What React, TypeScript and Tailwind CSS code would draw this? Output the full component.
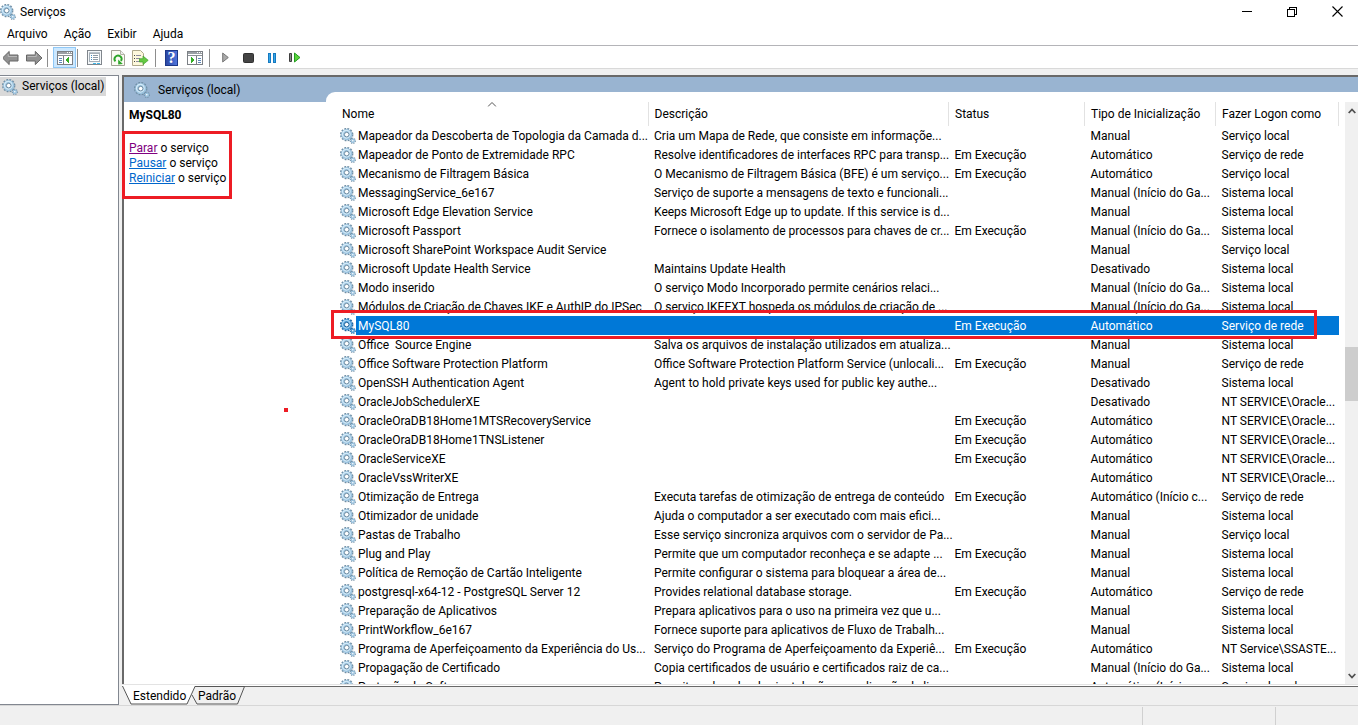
import React from "react";

type Service = [name: string, description: string, status: string, startup: string, logon: string];

const RUN = "Em Execução";
const TRIGGER = "Manual (Início do Ga...";

const services: Service[] = [
  ["Mapeador da Descoberta de Topologia da Camada d...", "Cria um Mapa de Rede, que consiste em informaçõe...", "", "Manual", "Serviço local"],
  ["Mapeador de Ponto de Extremidade RPC", "Resolve identificadores de interfaces RPC para transp...", RUN, "Automático", "Serviço de rede"],
  ["Mecanismo de Filtragem Básica", "O Mecanismo de Filtragem Básica (BFE) é um serviço...", RUN, "Automático", "Serviço local"],
  ["MessagingService_6e167", "Serviço de suporte a mensagens de texto e funcionali...", "", TRIGGER, "Sistema local"],
  ["Microsoft Edge Elevation Service", "Keeps Microsoft Edge up to update. If this service is d...", "", "Manual", "Sistema local"],
  ["Microsoft Passport", "Fornece o isolamento de processos para chaves de cr...", RUN, TRIGGER, "Sistema local"],
  ["Microsoft SharePoint Workspace Audit Service", "", "", "Manual", "Serviço local"],
  ["Microsoft Update Health Service", "Maintains Update Health", "", "Desativado", "Sistema local"],
  ["Modo inserido", "O serviço Modo Incorporado permite cenários relaci...", "", TRIGGER, "Sistema local"],
  ["Módulos de Criação de Chaves IKE e AuthIP do IPSec", "O serviço IKEEXT hospeda os módulos de criação de ...", "", TRIGGER, "Sistema local"],
  ["MySQL80", "", RUN, "Automático", "Serviço de rede"],
  ["Office  Source Engine", "Salva os arquivos de instalação utilizados em atualiza...", "", "Manual", "Sistema local"],
  ["Office Software Protection Platform", "Office Software Protection Platform Service (unlocali...", RUN, "Manual", "Serviço de rede"],
  ["OpenSSH Authentication Agent", "Agent to hold private keys used for public key authe...", "", "Desativado", "Sistema local"],
  ["OracleJobSchedulerXE", "", "", "Desativado", "NT SERVICE\\Oracle..."],
  ["OracleOraDB18Home1MTSRecoveryService", "", RUN, "Automático", "NT SERVICE\\Oracle..."],
  ["OracleOraDB18Home1TNSListener", "", RUN, "Automático", "NT SERVICE\\Oracle..."],
  ["OracleServiceXE", "", RUN, "Automático", "NT SERVICE\\Oracle..."],
  ["OracleVssWriterXE", "", "", "Automático", "NT SERVICE\\Oracle..."],
  ["Otimização de Entrega", "Executa tarefas de otimização de entrega de conteúdo", RUN, "Automático (Início c...", "Serviço de rede"],
  ["Otimizador de unidade", "Ajuda o computador a ser executado com mais efici...", "", "Manual", "Sistema local"],
  ["Pastas de Trabalho", "Esse serviço sincroniza arquivos com o servidor de Pa...", "", "Manual", "Serviço local"],
  ["Plug and Play", "Permite que um computador reconheça e se adapte ...", RUN, "Manual", "Sistema local"],
  ["Política de Remoção de Cartão Inteligente", "Permite configurar o sistema para bloquear a área de...", "", "Manual", "Sistema local"],
  ["postgresql-x64-12 - PostgreSQL Server 12", "Provides relational database storage.", RUN, "Automático", "Serviço de rede"],
  ["Preparação de Aplicativos", "Prepara aplicativos para o uso na primeira vez que u...", "", "Manual", "Sistema local"],
  ["PrintWorkflow_6e167", "Fornece suporte para aplicativos de Fluxo de Trabalh...", "", "Manual", "Sistema local"],
  ["Programa de Aperfeiçoamento da Experiência do Us...", "Serviço do Programa de Aperfeiçoamento da Experiê...", RUN, "Automático", "NT Service\\SSASTE..."],
  ["Propagação de Certificado", "Copia certificados de usuário e certificados raiz de ca...", "", TRIGGER, "Sistema local"],
  ["Proteção de Software", "Permite o download, a instalação e a aplicação de lic...", "", "Automático (Início ...", "Serviço de rede"],
];

const columns = ["Nome", "Descrição", "Status", "Tipo de Inicialização", "Fazer Logon como"];

function Gears({ selected = false }: { selected?: boolean }) {
  const dark = selected ? "#1f639b" : "#6f8da3";
  const mid = selected ? "#4a9bd6" : "#9ac2de";
  const light = selected ? "#a5d5f5" : "#d3eaf8";
  return (
    <svg width="16" height="16" viewBox="0 0 16 16" className="shrink-0" aria-hidden="true">
      <circle cx="6.7" cy="6.6" r="5.7" fill="none" stroke={dark} strokeWidth="2" strokeDasharray="1.8 1.18" />
      <circle cx="6.7" cy="6.6" r="4" fill="none" stroke={mid} strokeWidth="3.2" />
      <circle cx="6.3" cy="6.2" r="3.8" fill="none" stroke={light} strokeWidth="1.3" />
      <circle cx="6.7" cy="6.6" r="2.3" fill="#fff" stroke={dark} strokeWidth="1" />
      <circle cx="12.8" cy="12.8" r="2.4" fill="none" stroke={dark} strokeWidth="1.4" strokeDasharray="1.1 0.8" />
      <circle cx="12.8" cy="12.8" r="1.5" fill="#fff" stroke={mid} strokeWidth="1.4" />
    </svg>
  );
}

function Arrow({ forward = false }: { forward?: boolean }) {
  return (
    <svg width="18" height="16" viewBox="0 0 18 16" aria-hidden="true">
      <path
        d={forward ? "M16 8L9.3 1.4V5H.5v6h8.8v3.6z" : "M-.5 8l6.7-6.6V5H15v6H6.2v3.6z"}
        fill="#929292"
        stroke="#666"
        strokeLinejoin="round"
      />
      <path d={forward ? "M1.5 6.5h8.8V4" : "M5.2 4v2.5H14"} fill="none" stroke="#b9b9b9" />
    </svg>
  );
}

function ConsoleWindow({ tree = false }: { tree?: boolean }) {
  return (
    <svg width="16" height="14" viewBox="0 0 16 14" shapeRendering="crispEdges" aria-hidden="true">
      <rect x="0.5" y="0.5" width="15" height="13" fill="#fff" stroke="#7c8085" />
      <path d="M1 1h14v2H1z" fill="#9ba0a5" />
      <path d="M10 1.5h1M12 1.5h1M14 1.5h1" stroke="#fff" />
      <path d="M1 4.5h14" stroke="#8b9095" />
      {tree ? (
        <>
          <path d="M6.5 5v8" stroke="#7c8085" />
          <path d="M2 7.5h3M2 9.5h3M2 11.5h3" stroke="#5c86b8" />
          <path d="M12 6v6L8.5 9z" fill="#34ad25" />
        </>
      ) : (
        <>
          <path d="M9.5 5v8" stroke="#7c8085" />
          <path d="M11 7.5h3M11 9.5h3M11 11.5h3" stroke="#5c86b8" />
          <path d="M4 6v6L7.5 9z" fill="#34ad25" />
        </>
      )}
    </svg>
  );
}

function PropertiesIcon() {
  return (
    <svg width="16" height="16" viewBox="0 0 16 16" shapeRendering="crispEdges" aria-hidden="true">
      <rect x="0.5" y="0.5" width="14" height="14" fill="#f4f7f9" stroke="#80868c" />
      <rect x="2.5" y="3.5" width="10" height="8" fill="#fff" stroke="#a5afb8" />
      <path d="M2 2.5h11" stroke="#bcc4cb" />
      <path d="M4 5.5h1M4 7.5h1M4 9.5h1" stroke="#3e8ec6" />
      <path d="M6 5.5h5M6 7.5h5M6 9.5h5" stroke="#8f9aa5" />
      <path d="M6 13.5h3M10 13.5h3" stroke="#3cb5e6" />
    </svg>
  );
}

function RefreshIcon() {
  return (
    <svg width="14" height="16" viewBox="0 0 14 16" aria-hidden="true">
      <path d="M.5.5h9l4 4v11H.5z" fill="#fcfcf4" stroke="#a2a294" />
      <path d="M9.5.5v4h4" fill="#eee" stroke="#b5b5a8" />
      <path d="M4.4 11.4A3.5 3.5 0 1 1 10 11" fill="none" stroke="#2fa62b" strokeWidth="1.9" />
      <path d="M7.2 9.6v5l4.6-.6z" fill="#2fa62b" />
    </svg>
  );
}

function ExportIcon() {
  return (
    <svg width="17" height="16" viewBox="0 0 17 16" aria-hidden="true">
      <path d="M.5.5h8l3 3v12H.5z" fill="#fdf8dc" stroke="#aea88b" />
      <path d="M2 5.5h1M2 8.5h1M2 11.5h1" stroke="#444" />
      <path d="M4 5.5h5M4 8.5h4M4 11.5h5" stroke="#8b8ba0" />
      <path d="M7.5 8.7H11V6l5.2 4.3L11 14.6V12H7.5z" fill="#66c943" stroke="#3e9f2b" strokeWidth="0.7" />
    </svg>
  );
}

function HelpIcon() {
  return (
    <span className="flex h-4 w-[13px] items-center justify-center border border-[#1c3788] bg-linear-to-r from-[#2b47a4] to-[#4f75dc] font-['Liberation_Serif',serif] text-base leading-4 font-bold text-white">
      ?
    </span>
  );
}

function ToolButton({ label, active = false, children }: { label: string; active?: boolean; children: React.ReactNode }) {
  return (
    <button
      type="button"
      aria-label={label}
      className={
        active
          ? "flex h-[21px] w-[23px] items-center justify-center border border-[#90c8f6] bg-[#cce8ff]"
          : "flex h-[21px] w-[23px] items-center justify-center"
      }
    >
      {children}
    </button>
  );
}

function Divider({ wide = false }: { wide?: boolean }) {
  return (
    <span className={wide ? "mr-1 ml-[3px] h-[18px] w-px bg-[#8d8d8d]" : "mr-[5px] ml-px h-[18px] w-px bg-[#8d8d8d]"} />
  );
}

function Toolbar() {
  return (
    <div className="flex h-[23px] items-center border-b border-[#d9d9d9] bg-white pt-px">
      <ToolButton label="Voltar"><Arrow /></ToolButton>
      <ToolButton label="Avançar"><Arrow forward /></ToolButton>
      <Divider />
      <ToolButton label="Mostrar árvore de console" active><ConsoleWindow tree /></ToolButton>
      <Divider />
      <ToolButton label="Propriedades"><PropertiesIcon /></ToolButton>
      <ToolButton label="Atualizar"><RefreshIcon /></ToolButton>
      <ToolButton label="Exportar lista"><ExportIcon /></ToolButton>
      <Divider wide />
      <ToolButton label="Ajuda"><HelpIcon /></ToolButton>
      <ToolButton label="Mostrar painel de ações"><ConsoleWindow /></ToolButton>
      <Divider wide />
      <ToolButton label="Iniciar serviço">
        <svg width="7" height="11" viewBox="0 0 7 11" aria-hidden="true">
          <path d="M.7 1v9l5.6-4.5z" fill="#a9a9a9" stroke="#777" />
        </svg>
      </ToolButton>
      <ToolButton label="Parar serviço">
        <svg width="11" height="10" viewBox="0 0 11 10" aria-hidden="true">
          <rect x="0.5" y="0.5" width="10" height="9" rx="1" fill="#444" stroke="#303030" />
        </svg>
      </ToolButton>
      <ToolButton label="Pausar serviço">
        <svg width="8" height="10" viewBox="0 0 8 10" shapeRendering="crispEdges" aria-hidden="true">
          <path d="M0 0h3v10H0zM5 0h3v10H5z" fill="#1679c0" />
          <path d="M1 1h1v8H1zM6 1h1v8H6z" fill="#35a7e8" />
        </svg>
      </ToolButton>
      <ToolButton label="Reiniciar serviço">
        <svg width="12" height="11" viewBox="0 0 12 11" aria-hidden="true">
          <path d="M.5 1.5h2v8h-2z" fill="#888" stroke="#3d3d3d" />
          <path d="M5.5 1v9L11 5.5z" fill="#5bd33b" stroke="#239d20" />
        </svg>
      </ToolButton>
    </div>
  );
}

function ServiceTable() {
  return (
    <table className="w-full table-fixed border-collapse text-left whitespace-pre">
      <colgroup>
        <col className="w-[312px]" />
        <col />
        <col className="w-[136px]" />
        <col className="w-[131px]" />
        <col className="w-[123px]" />
      </colgroup>
      <thead>
        <tr className="h-6">
          {columns.map((column, i) => (
            <th key={column} className="relative border-r border-[#e2e2e2] p-0 pl-[6px] font-normal">
              {column}
              {i === 0 && (
                <svg width="9" height="5" viewBox="0 0 9 5" className="absolute top-0 left-1/2 -translate-x-1/2" aria-hidden="true">
                  <path d="M.5 4.5l4-4 4 4" fill="none" stroke="#555" />
                </svg>
              )}
            </th>
          ))}
        </tr>
      </thead>
      <tbody className="leading-[17px]">
        {services.map(([name, ...cells]) => {
          const selected = name === "MySQL80";
          return (
            <tr key={name} className="h-[19px]">
              <td className="p-0 pl-1">
                <div className="flex h-[19px] items-center">
                  <Gears selected={selected} />
                  <span className={selected ? "h-[19px] flex-1 bg-[#0078d7] pt-[2px] pl-[2px] text-white" : "h-[19px] flex-1 pt-[2px] pl-[2px]"}>
                    {name}
                  </span>
                </div>
              </td>
              {cells.map((cell, i) => (
                <td key={i} className={selected ? "bg-[#0078d7] p-0 pt-[2px] pl-[6px] text-white" : "p-0 pt-[2px] pl-[6px]"}>
                  {cell}
                </td>
              ))}
            </tr>
          );
        })}
      </tbody>
    </table>
  );
}

function ScrollBar() {
  return (
    <div className="ml-[6px] flex w-[13px] shrink-0 flex-col bg-[#f0f0f0]">
      <button type="button" aria-label="Rolar para cima" className="flex h-[17px] items-center justify-center">
        <svg width="8" height="6" viewBox="0 0 8 6" aria-hidden="true">
          <path d="M.7 5L4 1.5 7.3 5" fill="none" stroke="#505050" strokeWidth="1.8" />
        </svg>
      </button>
      <div className="grow-[228]" />
      <div className="h-[54px] bg-[#cdcdcd]" />
      <div className="grow-[266]" />
      <button type="button" aria-label="Rolar para baixo" className="flex h-[17px] items-center justify-center">
        <svg width="8" height="6" viewBox="0 0 8 6" aria-hidden="true">
          <path d="M.7 1L4 4.5 7.3 1" fill="none" stroke="#505050" strokeWidth="1.8" />
        </svg>
      </button>
    </div>
  );
}

function DetailPanel() {
  return (
    <section className="relative w-[202px] shrink-0 pt-1 pl-[5px]">
      <h2 className="leading-[19px] font-bold">MySQL80</h2>
      <ul className="mt-4 leading-[15px]">
        <li><a href="#parar" className="text-[#800080] underline">Parar</a> o serviço</li>
        <li><a href="#pausar" className="text-[#0066cc] underline">Pausar</a> o serviço</li>
        <li><a href="#reiniciar" className="text-[#0066cc] underline">Reiniciar</a> o serviço</li>
      </ul>
      <div className="pointer-events-none absolute top-[29px] -left-[2px] h-[68px] w-[110px] border-3 border-[#ed1c24]" />
      <div className="pointer-events-none absolute top-[306px] left-[160px] size-1 bg-[#ed1c24]" />
    </section>
  );
}

function ViewTabs() {
  return (
    <div className="relative h-[19px] border-t border-[#696969]">
      <svg width="124" height="19" viewBox="0 0 124 19" className="absolute -top-px left-0" aria-hidden="true">
        <path d="M70 .5h52l-7 17.5H75l-5-9z" fill="#f0f0f0" />
        <path d="M72 .5h50.5l-7 17.5H75l-5-9" fill="none" stroke="#555" />
        <path d="M0 0h73l-8 18H9z" fill="#fff" />
        <path d="M.5 0L9 18h56L73 .5" fill="none" stroke="#555" />
      </svg>
      <div className="relative flex pl-[11px] leading-[18px]" role="tablist">
        <button type="button" role="tab" aria-selected="true" className="w-[65px] text-left">Estendido</button>
        <button type="button" role="tab" aria-selected="false">Padrão</button>
      </div>
    </div>
  );
}

export default function App() {
  return (
    <div className="flex h-screen flex-col overflow-hidden bg-[#f0f0f0] font-[Roboto,'Noto_Sans',sans-serif] text-xs leading-[19px] text-black">
      <header className="flex h-[23px] shrink-0 items-center bg-white">
        <Gears />
        <h1 className="ml-1 flex-1 pt-[2px]">Serviços</h1>
        <button type="button" aria-label="Minimizar" className="flex h-[23px] w-[45px] items-center justify-center">
          <svg width="10" height="10" shapeRendering="crispEdges" aria-hidden="true"><path d="M0 4.5h10" stroke="#000" /></svg>
        </button>
        <button type="button" aria-label="Restaurar" className="flex h-[21px] w-[46px] items-center justify-center">
          <svg width="10" height="10" fill="none" stroke="#000" shapeRendering="crispEdges" aria-hidden="true">
            <path d="M.5 2.5h7v7h-7zM2.5 2.5v-2h7v7h-2" />
          </svg>
        </button>
        <button type="button" aria-label="Fechar" className="flex h-[21px] w-[43px] items-center justify-center pl-[2px]">
          <svg width="11" height="11" aria-hidden="true"><path d="M.5.5l10 10M10.5.5l-10 10" stroke="#000" strokeWidth="1.1" /></svg>
        </button>
      </header>
      <nav className="flex h-[23px] shrink-0 items-center gap-4 border-b border-[#b4b4b8] bg-white pl-[7px]">
        <button type="button">Arquivo</button>
        <button type="button">Ação</button>
        <button type="button">Exibir</button>
        <button type="button">Ajuda</button>
      </nav>
      <Toolbar />

      <main className="flex min-h-0 flex-1 gap-[3px] pt-[6px]">
        <aside className="w-[119px] shrink-0 border-t border-r border-b border-[#828790] bg-white">
          <a href="#servicos" className="mt-px flex h-[19px] w-[106px] items-center gap-1 bg-[#d9d9d9] pl-[2px]">
            <Gears />
            <span>Serviços (local)</span>
          </a>
        </aside>
        <div className="flex min-w-0 flex-1 flex-col">
          <div className="flex min-h-0 flex-1 flex-col border-t-2 border-l-2 border-[#696969] bg-white">
            <div className="flex h-[25px] shrink-0 bg-[#99b4d1]">
              <div className="flex w-[202px] shrink-0 items-center gap-2 pt-px pl-[10px]">
                <Gears />
                <span>Serviços (local)</span>
              </div>
              <div className="mt-[15px] flex-1 rounded-tl-[9px] bg-white" />
            </div>
            <div className="flex min-h-0 flex-1">
              <DetailPanel />
              <div className="relative flex min-w-0 flex-1 pl-[10px]">
                <div className="min-w-0 flex-1 overflow-hidden"><ServiceTable /></div>
                <ScrollBar />
                <div className="pointer-events-none absolute top-[208px] right-[41px] left-[5px] h-[29px] border-3 border-[#ed1c24]" />
              </div>
            </div>
          </div>
          <div className="h-[2px] border-t border-[#e3e3e3] bg-white" />
          <ViewTabs />
        </div>
      </main>
      <footer className="flex h-5 shrink-0 justify-end border-t border-[#d7d7d7] pt-px">
        <div className="w-[133px] border-l border-[#d0d0d0]" />
        <div className="w-[83px] border-l border-[#d0d0d0]" />
      </footer>
    </div>
  );
}
